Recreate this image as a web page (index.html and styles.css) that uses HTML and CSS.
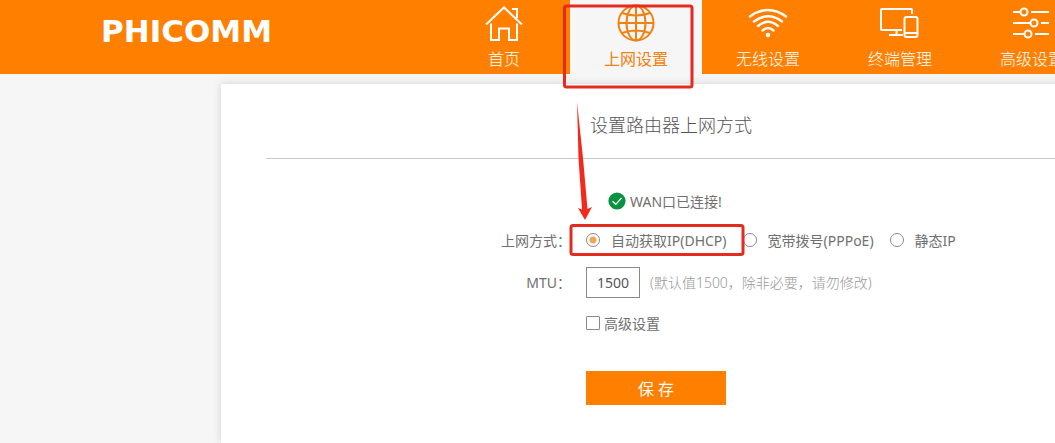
FILE: index.html
```
<!DOCTYPE html>
<html lang="zh-CN">
<head>
  <meta charset="UTF-8">
  <meta name="viewport" content="width=device-width, initial-scale=1.0">
  <title>上网设置</title>
  <link rel="stylesheet" href="styles.css">
</head>
<body>
  <div class="page">
    <header class="header">
      <div class="header-inner">
        <a class="logo" href="#">PHICOMM</a>
        <nav class="nav">
          <a class="nav-item" href="#">
            <svg width="40" height="38" viewBox="0 0 40 38" fill="none" stroke="currentColor" stroke-width="2">
              <path d="M2 20.500 20 3.500 38 20.500M28 5h5v9M7 19.500V36h8V24.500h10V36h8V19.500"/>
            </svg>
            <span>首页</span>
          </a>
          <a class="nav-item active" href="#">
            <svg width="40" height="38" viewBox="0 0 40 38" fill="none" stroke="currentColor" stroke-width="2">
              <circle cx="20" cy="19" r="17.500"/>
              <ellipse cx="20" cy="19" rx="9.500" ry="17.500"/>
              <path d="M20 1.500v35M2.500 19h35M6 9q14 5 28 0M6 29q14-5 28 0"/>
            </svg>
            <span>上网设置</span>
          </a>
          <a class="nav-item" href="#">
            <svg width="40" height="38" viewBox="0 0 40 38" fill="none" stroke="currentColor" stroke-width="2.400">
              <path d="M2 12.500q18-13 36 0M6 17.500q14-10.500 28 0M10 22q10-8.500 20 0M14.500 26.500q5.500-5 11 0" stroke-linecap="round"/>
              <circle cx="20" cy="31" r="2.300" fill="currentColor" stroke="none"/>
            </svg>
            <span>无线设置</span>
          </a>
          <a class="nav-item" href="#">
            <svg width="40" height="38" viewBox="0 0 40 38" fill="none" stroke="currentColor" stroke-width="2">
              <path d="M32 10V6q0-1-1-1H2Q1 5 1 6v19q0 1 1 1h20M16.500 26v5M9 31h14"/>
              <rect x="24.500" y="13" width="13" height="20" rx="2"/>
              <path d="M24.500 29h13"/>
            </svg>
            <span>终端管理</span>
          </a>
          <a class="nav-item" href="#">
            <svg width="40" height="38" viewBox="0 0 40 38" fill="none" stroke="currentColor" stroke-width="2">
              <path d="M1 8h7M19 8h18M1 19h17M29 19h8M1 30h11M23 30h14"/>
              <circle cx="12" cy="8" r="3.500"/>
              <circle cx="22" cy="19" r="3.500"/>
              <circle cx="16" cy="30" r="3.500"/>
            </svg>
            <span>高级设置</span>
          </a>
        </nav>
      </div>
    </header>

    <main class="panel">
      <h1>设置路由器上网方式</h1>

      <form class="form">
        <p class="status">
          <svg width="18" height="18" viewBox="0 0 18 18">
            <circle cx="9" cy="9" r="8.600" fill="#099340"/>
            <path d="M4.500 9.200 7.800 12.300 13.500 6" fill="none" stroke="#fff" stroke-width="1.200"/>
          </svg>
          WAN口已连接!
        </p>

        <div class="row" role="radiogroup" aria-labelledby="mode-label">
          <span class="label" id="mode-label">上网方式：</span>
          <label class="radio"><input type="radio" name="mode" checked>自动获取IP(DHCP)</label>
          <label class="radio"><input type="radio" name="mode">宽带拨号(PPPoE)</label>
          <label class="radio"><input type="radio" name="mode">静态IP</label>
        </div>

        <div class="row">
          <label class="label" for="mtu">MTU：</label>
          <input class="mtu" id="mtu" type="text" value="1500">
          <span class="hint">(默认值1500，除非必要，请勿修改)</span>
        </div>

        <div class="field">
          <label class="check"><input type="checkbox">高级设置</label>
        </div>

        <div class="field">
          <button class="save" type="button">保 存</button>
        </div>
      </form>

      <!-- red marks over the tab and the selected mode -->
      <svg class="marks" width="190" height="260" viewBox="0 0 190 260" aria-hidden="true">
        <g fill="none" stroke="#e52b20" stroke-width="3">
          <rect x="3.500" y="6" width="127.500" height="81" rx="2"/>
          <rect x="10" y="225.500" width="172" height="29" rx="2"/>
        </g>
        <path d="M16 102 22 158 26.500 209 31 207 24 220 17 208 21 209.500 17.500 158Z" fill="#f22a1d"/>
      </svg>
    </main>
  </div>
</body>
</html>
```
FILE: styles.css
```
* {
  box-sizing: border-box;
}

body {
  margin: 0;
  overflow-x: hidden;
  background-color: #f6f6f6;
  color: #707070;
  font-family: "Noto Sans", "Noto Sans CJK SC", sans-serif;
  font-size: 14px;
}

.page {
  display: flex;
  flex-direction: column;
  min-width: 1342px;
  min-height: 100vh;
}

.header {
  background-color: #ff7f00;
}

.header-inner {
  display: flex;
  width: 1140px;
  height: 74px;
  margin: 0 auto;
}

.logo {
  width: 337px;
  padding-top: 12px;
  color: #fff;
  font-family: "DejaVu Sans", sans-serif;
  font-size: 31px;
  font-weight: bold;
  line-height: 38px;
  text-decoration: none;
}

.nav {
  display: flex;
}

.nav-item {
  display: flex;
  flex-direction: column;
  align-items: center;
  gap: 4px;
  width: 132px;
  padding-top: 4px;
  color: #fff;
  font-size: 16px;
  font-weight: 300;
  line-height: 26px;
  text-decoration: none;
}

.nav-item.active {
  background-color: #f6f6f6;
  color: #ef8210;
  font-weight: 400;
}

.panel {
  position: relative;
  flex-grow: 1;
  width: 900px;
  margin: 10px auto 0;
  padding: 0 45px 30px;
  background-color: #fff;
  box-shadow: 0 0 8px rgba(0, 0, 0, 0.15);
}

h1 {
  margin: 0;
  padding: 29px 0 21px;
  border-bottom: 1px solid #c8c8c8;
  color: #555;
  font-size: 18px;
  font-weight: 300;
  line-height: 24px;
  text-align: center;
}

.form {
  display: flex;
  flex-direction: column;
  gap: 12px;
  padding-top: 30px;
}

.status {
  display: flex;
  align-items: center;
  gap: 4px;
  height: 24px;
  margin: 0;
  padding-left: 342px;
}

.row {
  display: flex;
  align-items: center;
  height: 30px;
}

.label {
  width: 305px;
  margin-right: 15px;
  text-align: right;
}

.radio {
  display: flex;
  align-items: center;
  gap: 11px;
  margin-right: 16px;
}

input {
  margin: 0;
  appearance: none;
  border: 1px solid #8a8a8a;
  background-color: #fff;
}

input[type="radio"] {
  width: 14px;
  height: 14px;
  border-radius: 50%;
}

input[type="radio"]:checked {
  background-image: radial-gradient(circle, #f2a654 3px, transparent 4px);
}

input[type="checkbox"] {
  width: 14px;
  height: 14px;
  border-radius: 1px;
}

input[type="checkbox"]:checked {
  background-color: #ff7f00;
}

.mtu {
  width: 54px;
  height: 31px;
  padding: 0 10px;
  color: #555;
  font: inherit;
}

.hint {
  margin-left: 10px;
  color: #999;
  font-weight: 300;
}

.field {
  padding-left: 320px;
}

.check {
  display: inline-flex;
  align-items: center;
  gap: 4px;
  height: 28px;
}

.save {
  width: 140px;
  height: 34px;
  margin-top: 22px;
  border: none;
  background-color: #ff7f00;
  color: #fff;
  font: inherit;
  font-size: 16px;
  cursor: pointer;
}

.save:hover {
  background-color: #f07800;
}

.marks {
  position: absolute;
  top: -84px;
  left: 340px;
  pointer-events: none;
}
```
